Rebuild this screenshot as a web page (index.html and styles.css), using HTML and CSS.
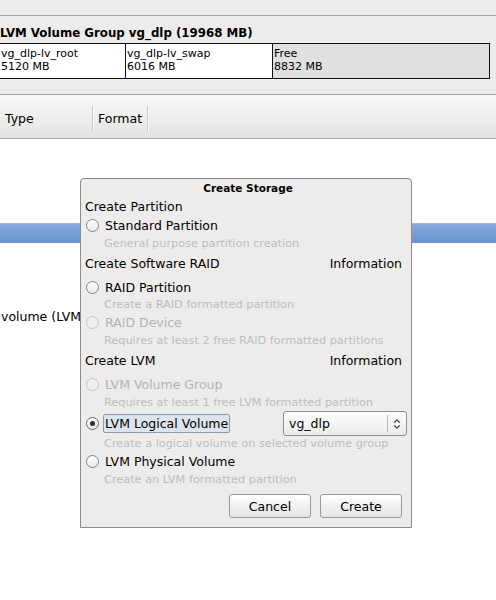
FILE: index.html
```html
<!DOCTYPE html>
<html>
<head>
<meta charset="utf-8">
<link rel="stylesheet" href="styles.css">
</head>
<body>
<div class="page">
  <div class="topbar"></div>
  <section class="vg">
    <h1 class="vg-title">LVM Volume Group vg_dlp (19968 MB)</h1>
    <div class="vg-bar">
      <div class="cell"><span>vg_dlp-lv_root</span><span>5120 MB</span></div>
      <div class="cell"><span>vg_dlp-lv_swap</span><span>6016 MB</span></div>
      <div class="cell free"><span>Free</span><span>8832 MB</span></div>
    </div>
  </section>
  <div class="thead">
    <div class="th th-type">Type</div>
    <div class="th th-format">Format</div>
  </div>
  <div class="tbody">
    <div class="row row-sel"></div>
    <div class="row row-text">volume (LVM)</div>
  </div>

  <div class="dialog">
    <div class="dlg-title">Create Storage</div>
    <div class="sec sec-first"><span>Create Partition</span></div>
    <div class="opt"><span class="radio"></span><span class="lbl">Standard Partition</span></div>
    <div class="sub">General purpose partition creation</div>
    <div class="sec"><span>Create Software RAID</span><span>Information</span></div>
    <div class="opt mt4"><span class="radio"></span><span class="lbl">RAID Partition</span></div>
    <div class="sub h17">Create a RAID formatted partition</div>
    <div class="opt disabled"><span class="radio"></span><span class="lbl">RAID Device</span></div>
    <div class="sub">Requires at least 2 free RAID formatted partitions</div>
    <div class="sec"><span>Create LVM</span><span>Information</span></div>
    <div class="opt mt4 disabled"><span class="radio"></span><span class="lbl">LVM Volume Group</span></div>
    <div class="sub">Requires at least 1 free LVM formatted partition</div>
    <div class="opt opt-lv">
      <span class="radio checked"><span class="dot"></span></span>
      <span class="lbl focus">LVM Logical Volume</span>
      <div class="combo">
        <span class="combo-text">vg_dlp</span>
        <span class="combo-btn">
          <svg width="8" height="12" viewBox="0 0 8 12"><path d="M1.2 4.6 L4 1.8 L6.8 4.6 M1.2 7.4 L4 10.2 L6.8 7.4" fill="none" stroke="#3a3a3a" stroke-width="1.2"/></svg>
        </span>
      </div>
    </div>
    <div class="sub h16">Create a logical volume on selected volume group</div>
    <div class="opt"><span class="radio"></span><span class="lbl">LVM Physical Volume</span></div>
    <div class="sub">Create an LVM formatted partition</div>
    <div class="buttons">
      <button class="btn">Cancel</button>
      <button class="btn">Create</button>
    </div>
  </div>
</div>
</body>
</html>
```

FILE: styles.css
```css
* { box-sizing: border-box; }
html, body { margin: 0; padding: 0; }
body {
  width: 496px;
  height: 600px;
  overflow: hidden;
  background: #ffffff;
  color: #000;
  font-family: "DejaVu Sans", "Liberation Sans", sans-serif;
  font-size: 12.5px;
}
.page { position: relative; height: 600px; }

.topbar {
  height: 16px;
  background: #edeceb;
  border-bottom: 1px solid #a3a3a3;
}
.vg {
  height: 79px;
  background: #edeceb;
  border-bottom: 1px solid #a3a3a3;
  padding-top: 9px;
}
.vg-title {
  margin: 0;
  height: 18px;
  font-size: 11.8px;
  font-weight: bold;
  line-height: 16px;
  white-space: nowrap;
}
.vg-bar {
  display: grid;
  grid-template-columns: 126px 147px 1fr;
  width: 490px;
  height: 36px;
  border: 1px solid #111;
  border-left: 0;
}
.cell {
  display: flex;
  flex-direction: column;
  background: #fff;
  border-right: 1px solid #111;
  padding: 3px 0 0 1px;
  font-size: 11px;
  line-height: 13px;
  white-space: nowrap;
}
.cell.free { background: #e0e0e0; border-right: 0; }

.thead {
  display: flex;
  height: 44px;
  background: linear-gradient(#f9f9f8, #e3e3e2);
  border-bottom: 1px solid #a8a8a8;
}
.th {
  display: flex;
  align-items: center;
  margin: 11px 0 7px;
  padding-left: 5px;
  border-right: 1px solid #c8c8c8;
  box-shadow: 1px 0 0 #fbfbfb;
}
.th-type { width: 93px; }
.th-format { width: 55px; }

.tbody { background: #fff; }
.row-sel {
  margin-top: 84px;
  height: 20px;
  background: linear-gradient(#86aadb, #6b94cc);
  border-top: 1px solid #9ab8e0;
}
.row-text {
  margin-top: 65px;
  height: 18px;
  line-height: 18px;
  padding-left: 1px;
  white-space: nowrap;
}

.dialog {
  position: absolute;
  left: 80px;
  top: 178px;
  width: 332px;
  height: 350px;
  background: #edeceb;
  border: 1px solid #8c8c8c;
  border-radius: 4px 4px 0 0;
  padding: 0 9px 0 4px;
  display: flex;
  flex-direction: column;
}
.dlg-title {
  height: 18px;
  line-height: 18px;
  padding-left: 9px;
  text-align: center;
  font-size: 10.5px;
  font-weight: bold;
}
.sec {
  height: 22px;
  display: flex;
  justify-content: space-between;
  align-items: center;
}
.sec-first { height: 19px; }
.opt {
  height: 18px;
  display: flex;
  align-items: center;
  padding-left: 1px;
}
.mt4 { margin-top: 4px; }
.radio {
  width: 13px;
  height: 13px;
  border-radius: 50%;
  border: 1px solid #858585;
  background: linear-gradient(#ffffff, #e9e9e9);
  display: flex;
  align-items: center;
  justify-content: center;
  flex: none;
}
.radio .dot {
  width: 5px;
  height: 5px;
  border-radius: 50%;
  background: #2d2d2d;
}
.radio.checked { border-color: #6d6d6d; }
.lbl { margin-left: 6px; white-space: nowrap; }
.disabled .radio { border-color: #c5c5c5; background: #efeeed; }
.disabled .lbl { color: #b3b3b3; }
.sub {
  height: 18px;
  line-height: 19px;
  padding-left: 19px;
  font-size: 11.3px;
  color: #bdbdbd;
  white-space: nowrap;
}
.h17 { height: 17px; line-height: 18px; }
.h16 { height: 16px; line-height: 15px; }

.opt-lv { height: 25px; }
.lbl.focus {
  margin-left: 4px;
  height: 19px;
  line-height: 17px;
  padding: 0 1px;
  border: 1px solid #8a9ab2;
  border-radius: 2px;
  background: #dce4ee;
}
.combo {
  margin-left: auto;
  margin-right: -5px;
  width: 124px;
  height: 25px;
  border: 1px solid #8e8e8e;
  border-radius: 3px;
  background: linear-gradient(#fdfdfd, #ebebea);
  display: flex;
  align-items: center;
}
.combo-text { flex: 1; padding-left: 5px; }
.combo-btn {
  width: 19px;
  height: 17px;
  border-left: 1px solid #b9b9b9;
  display: flex;
  align-items: center;
  justify-content: center;
}
.combo-btn svg { display: block; }

.buttons {
  margin-top: 6px;
  height: 24px;
  display: flex;
  justify-content: flex-end;
  gap: 9px;
}
.btn {
  width: 82px;
  height: 24px;
  padding: 0;
  border: 1px solid #9a9a9a;
  border-radius: 3px;
  background: linear-gradient(#fefefe, #e4e4e3);
  font-family: "DejaVu Sans", "Liberation Sans", sans-serif;
  font-size: 12.5px;
  color: #000;
}
```
